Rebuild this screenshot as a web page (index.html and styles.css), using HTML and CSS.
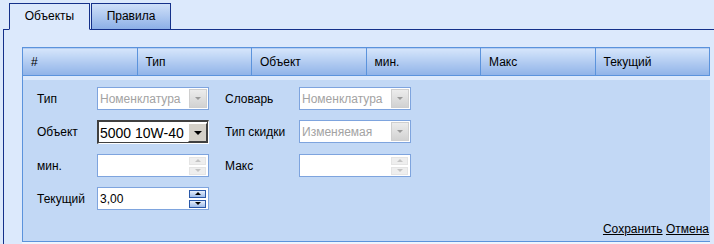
FILE: index.html
```html
<!DOCTYPE html>
<html lang="ru">
<head>
  <meta charset="UTF-8" />
  <title>Скидки</title>
  <link rel="stylesheet" href="styles.css">
</head>
<body>
<div class="page">
  <div class="tabs">
    <div class="tab active">Объекты</div>
    <div class="tab">Правила</div>
  </div>

  <div class="panel">
    <div class="grid">
      <table class="grid-head">
        <tr><th>#</th><th>Тип</th><th>Объект</th><th>мин.</th><th>Макс</th><th>Текущий</th></tr>
      </table>
      <div class="strip"></div>
      <div class="edit-form">
        <div class="form-rows">
          <label>Тип</label>
          <div class="combo disabled"><span class="val">Номенклатура</span><span class="drop"><i></i></span></div>
          <span></span>
          <label>Словарь</label>
          <div class="combo disabled"><span class="val">Номенклатура</span><span class="drop"><i></i></span></div>

          <label>Объект</label>
          <div class="combo active"><span class="val">5000 10W-40</span><span class="drop"><i></i></span></div>
          <span></span>
          <label>Тип скидки</label>
          <div class="combo disabled"><span class="val">Изменяемая</span><span class="drop"><i></i></span></div>

          <label>мин.</label>
          <div class="spin disabled"><span class="val"></span><span class="btns"><b class="up"><i></i></b><b class="down"><i></i></b></span></div>
          <span></span>
          <label>Макс</label>
          <div class="spin disabled"><span class="val"></span><span class="btns"><b class="up"><i></i></b><b class="down"><i></i></b></span></div>

          <label>Текущий</label>
          <div class="spin"><span class="val">3,00</span><span class="btns"><b class="up"><i></i></b><b class="down"><i></i></b></span></div>
        </div>
        <div class="actions"><a href="#">Сохранить</a> <a href="#">Отмена</a></div>
      </div>
      <div class="after"></div>
    </div>
  </div>
</div>
</body>
</html>
```

FILE: styles.css
```css
body { margin: 0; background: #dce9fc; font-family: 'Liberation Sans', Arial, sans-serif; font-size: 12px; color: #000; overflow: hidden; }
.page { padding: 3px 0 0 3px; height: 241px; overflow: hidden; }

.tabs { display: flex; gap: 1px; padding-left: 6px; position: relative; z-index: 1; margin-bottom: -1px; }
.tab { height: 25px; line-height: 25px; border: 1px solid #15318a; padding: 0 14px; width: 51px; text-align: center; background: linear-gradient(#cfe0f9, #8db0e7); }
.tab:nth-child(2) { width: 50px; }
.tab.active { background: #dce9fc; border-bottom-color: #dce9fc; }

.panel { border-top: 1px solid #15318a; border-left: 1px solid #15318a; padding: 17px 0 0 18px; height: 197px; }

.grid { width: 688px; }
.grid-head { width: 688px; border-collapse: collapse; table-layout: fixed; }
.grid-head th { height: 27px; padding: 0 0 0 8px; border: 1px solid #5b93dc; background: linear-gradient(#d6e6fb, #8fb2e8); font-weight: normal; text-align: left; }
.strip { height: 4px; border-left: 1px solid #5b93dc; }

.edit-form { background: #c2d8f5; border-left: 1px solid #5b93dc; border-bottom: 1px solid #5b93dc; padding: 7px 1px 5px 14px; }
.form-rows { display: grid; grid-template-columns: 60px 112px 16px 74px 112px; row-gap: 10px; }
.form-rows label { display: flex; align-items: center; height: 23px; white-space: nowrap; }

.combo, .spin { display: flex; align-items: center; height: 21px; border: 1px solid #7ea4de; background: #fff; }
.val { flex: 1; padding-left: 2px; overflow: hidden; white-space: nowrap; }
.disabled .val { color: #a3a3a3; }

.drop { width: 18px; height: 19px; margin-right: 1px; border: 1px solid #cfcfcf; box-sizing: border-box; background: linear-gradient(#ececec, #d2d2d2); display: flex; align-items: center; justify-content: center; }
.drop i { width: 0; height: 0; border-left: 3px solid transparent; border-right: 3px solid transparent; border-top: 3px solid #9a9a9a; }

.combo.active { border-width: 2px 1px 1px 2px; border-style: solid; border-color: #404040 #fff #fff #404040; box-shadow: inset -1px -1px 0 #404040; height: 21px; }
.combo.active .val { font-size: 14px; padding-left: 1px; }
.combo.active .drop { width: 19px; height: 19px; margin: 0 1px 0 0; border: 1px solid; border-color: #fff #404040 #404040 #fff; background: #d4d0c8; }
.combo.active .drop i { border-left-width: 4px; border-right-width: 4px; border-top: 4px solid #000; }

.spin .btns { display: flex; flex-direction: column; gap: 2px; margin-right: 2px; }
.spin b { width: 17px; height: 8px; box-sizing: border-box; display: flex; align-items: center; justify-content: center; border: 1px solid #2a58a8; background: linear-gradient(#e6effc, #9ebbe8); }
.spin.disabled b { border-color: #e4e4e4; background: #eeeeee; }
.spin b i { width: 0; height: 0; border-left: 3px solid transparent; border-right: 3px solid transparent; }
.spin b.up i { border-bottom: 3px solid #000; }
.spin b.down i { border-top: 3px solid #000; }
.spin.disabled b.up i { border-bottom-color: #c4c4c4; }
.spin.disabled b.down i { border-top-color: #c4c4c4; }

.actions { text-align: right; margin-top: 12px; line-height: 14px; }
.actions a { color: #000; text-decoration: underline; }

.after { height: 4px; background: #eef4fd; }
```
